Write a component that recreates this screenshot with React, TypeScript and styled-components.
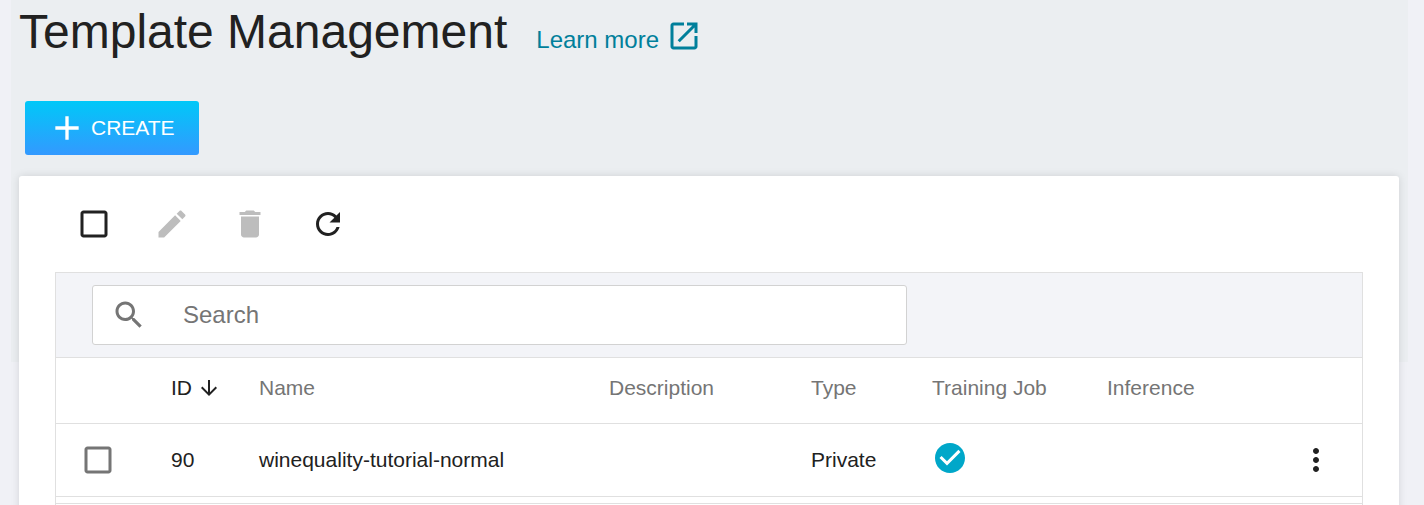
import React from "react";
import styled, { createGlobalStyle } from "styled-components";

const Global = createGlobalStyle`
  html, body { margin: 0; padding: 0; background: #f0f1f6; overflow: hidden; height: 505px; }
  body { font-family: "Liberation Sans", Arial, sans-serif; color: #212121; }
  * { box-sizing: border-box; }
`;

const Shell = styled.div`
  width: 1424px;
  height: 505px;
  padding: 0 16px 0 11px;
  overflow: hidden;
`;
const Main = styled.main`
  height: 362px;
  background: #ebeef1;
  padding-left: 8px;
`;
const TitleRow = styled.div`
  display: flex;
  align-items: baseline;
  height: 101px;
  gap: 29px;
`;
const Title = styled.h1`
  margin: 0;
  font-size: 48px;
  font-weight: 400;
  line-height: 64px;
  color: #212121;
`;
const LearnMore = styled.a`
  display: inline-flex;
  align-items: baseline;
  gap: 7px;
  font-size: 24px;
  color: #007f9b;
  text-decoration: none;
  & svg { align-self: center; position: relative; top: -8px; }
`;
const CreateButton = styled.button`
  display: flex;
  align-items: center;
  width: 174px;
  height: 54px;
  margin-left: 6px;
  padding: 0 0 0 22px;
  gap: 4px;
  border: 0;
  border-radius: 3px;
  color: #fff;
  font-family: inherit;
  font-size: 21px;
  background: linear-gradient(180deg, #00c8f8 0%, #3399ff 100%);
`;
const Card = styled.section`
  width: 1380px;
  margin-top: 21px;
  height: 400px;
  background: #fff;
  border-radius: 3px;
  box-shadow: 0 0 8px rgba(0, 0, 0, 0.12);
  padding: 0 36px;
`;
const Toolbar = styled.div`
  display: flex;
  height: 96px;
`;
const ToolButton = styled.span<{ $off?: boolean }>`
  display: flex;
  align-items: center;
  justify-content: center;
  width: 78px;
  height: 96px;
  color: ${(p) => (p.$off ? "#bdbdbd" : "#212121")};
`;
const TableBox = styled.div`
  border: 1px solid #e0e0e0;
  border-bottom: 0;
  height: 300px;
`;
const SearchBand = styled.div`
  background: #f3f4f8;
  padding: 12px 36px;
  border-bottom: 1px solid #e0e0e0;
`;
const SearchBox = styled.div`
  display: flex;
  align-items: center;
  width: 815px;
  height: 60px;
  background: #fff;
  border: 1px solid #d2d2d2;
  border-radius: 3px;
  padding-left: 18px;
  gap: 34px;
  color: #757575;
`;
const SearchInput = styled.input`
  border: 0;
  outline: 0;
  flex: 1;
  font-family: inherit;
  font-size: 24px;
  background: transparent;
  color: #212121;
  &::placeholder { color: #757575; opacity: 1; }
`;
const Row = styled.div<{ $height: number }>`
  display: grid;
  grid-template-columns: 115px 88px 350px 202px 121px 175px 1fr 64px;
  align-items: center;
  height: ${(p) => p.$height}px;
  border-bottom: 1px solid #e0e0e0;
  font-size: 21px;
`;
const HeadCell = styled.div<{ $dark?: boolean }>`
  display: flex;
  align-items: center;
  gap: 5px;
  margin-bottom: 6px;
  color: ${(p) => (p.$dark ? "#212121" : "#757575")};
`;
const Cell = styled.div`
  display: flex;
  align-items: center;
  color: #212121;
`;
const RowCheck = styled(Cell)`
  padding-left: 24px;
  color: #757575;
`;
const StatusCell = styled(Cell)`
  margin-bottom: 4px;
`;
const Spacer = styled.div`
  height: 7px;
  border-bottom: 1px solid #e0e0e0;
`;
const MoreCell = styled(Cell)`
  justify-content: flex-end;
  padding-right: 28px;
`;

const Icon = ({ d, size = 36, color }: { d: string; size?: number; color?: string }) => (
  <svg width={size} height={size} viewBox="0 0 24 24" fill={color || "currentColor"} aria-hidden="true">
    <path d={d} />
  </svg>
);

const P = {
  box: "M19 5v14H5V5h14m0-2H5c-1.1 0-2 .9-2 2v14c0 1.1.9 2 2 2h14c1.1 0 2-.9 2-2V5c0-1.1-.9-2-2-2z",
  edit: "M3 17.25V21h3.75L17.81 9.94l-3.75-3.75L3 17.25zM20.71 7.04c.39-.39.39-1.02 0-1.41l-2.34-2.34c-.39-.39-1.02-.39-1.41 0l-1.83 1.83 3.75 3.75 1.83-1.83z",
  del: "M6 19c0 1.1.9 2 2 2h8c1.1 0 2-.9 2-2V7H6v12zM19 4h-3.5l-1-1h-5l-1 1H5v2h14V4z",
  refresh: "M17.65 6.35C16.2 4.9 14.21 4 12 4c-4.42 0-7.99 3.58-7.99 8s3.57 8 7.99 8c3.73 0 6.84-2.55 7.73-6h-2.08c-.82 2.33-3.04 4-5.65 4-3.31 0-6-2.69-6-6s2.69-6 6-6c1.66 0 3.14.69 4.22 1.78L13 11h7V4l-2.35 2.35z",
  search: "M15.5 14h-.79l-.28-.27C15.41 12.59 16 11.11 16 9.5 16 5.91 13.09 3 9.5 3S3 5.91 3 9.5 5.91 16 9.5 16c1.61 0 3.09-.59 4.23-1.57l.27.28v.79l5 4.99L20.49 19l-4.99-5zm-6 0C7.01 14 5 11.99 5 9.5S7.01 5 9.5 5 14 7.01 14 9.5 11.99 14 9.5 14z",
  down: "M20 12l-1.41-1.41L13 16.17V4h-2v12.17l-5.58-5.59L4 12l8 8 8-8z",
  more: "M12 8c1.1 0 2-.9 2-2s-.9-2-2-2-2 .9-2 2 .9 2 2 2zm0 2c-1.1 0-2 .9-2 2s.9 2 2 2 2-.9 2-2-.9-2-2-2zm0 6c-1.1 0-2 .9-2 2s.9 2 2 2 2-.9 2-2-.9-2-2-2z",
  check: "M12 2C6.48 2 2 6.48 2 12s4.48 10 10 10 10-4.48 10-10S17.52 2 12 2zm-2 15l-5-5 1.41-1.41L10 14.17l7.59-7.59L19 8l-9 9z",
  open: "M19 19H5V5h7V3H5c-1.11 0-2 .9-2 2v14c0 1.1.89 2 2 2h14c1.1 0 2-.9 2-2v-7h-2v7zM14 3v2h3.59l-9.83 9.83 1.41 1.41L19 6.41V10h2V3h-7z",
  add: "M19 13h-6v6h-2v-6H5v-2h6V5h2v6h6v2z",
};

export default function App() {
  return (
    <Shell>
      <Global />
      <Main>
        <TitleRow>
          <Title>Template Management</Title>
          <LearnMore href="#">
            Learn more
            <Icon d={P.open} />
          </LearnMore>
        </TitleRow>
        <CreateButton>
          <Icon d={P.add} size={40} />
          CREATE
        </CreateButton>
        <Card>
          <Toolbar>
            <ToolButton><Icon d={P.box} /></ToolButton>
            <ToolButton $off><Icon d={P.edit} /></ToolButton>
            <ToolButton $off><Icon d={P.del} /></ToolButton>
            <ToolButton><Icon d={P.refresh} /></ToolButton>
          </Toolbar>
          <TableBox>
            <SearchBand>
              <SearchBox>
                <Icon d={P.search} />
                <SearchInput placeholder="Search" />
              </SearchBox>
            </SearchBand>
            <Row $height={66}>
              <div />
              <HeadCell $dark>ID <Icon d={P.down} size={24} /></HeadCell>
              <HeadCell>Name</HeadCell>
              <HeadCell>Description</HeadCell>
              <HeadCell>Type</HeadCell>
              <HeadCell>Training Job</HeadCell>
              <HeadCell>Inference</HeadCell>
              <div />
            </Row>
            <Row $height={73}>
              <RowCheck><Icon d={P.box} /></RowCheck>
              <Cell>90</Cell>
              <Cell>winequality-tutorial-normal</Cell>
              <Cell />
              <Cell>Private</Cell>
              <StatusCell><Icon d={P.check} color="#00a7c9" /></StatusCell>
              <Cell />
              <MoreCell><Icon d={P.more} /></MoreCell>
            </Row>
            <Spacer />
          </TableBox>
        </Card>
      </Main>
    </Shell>
  );
}
